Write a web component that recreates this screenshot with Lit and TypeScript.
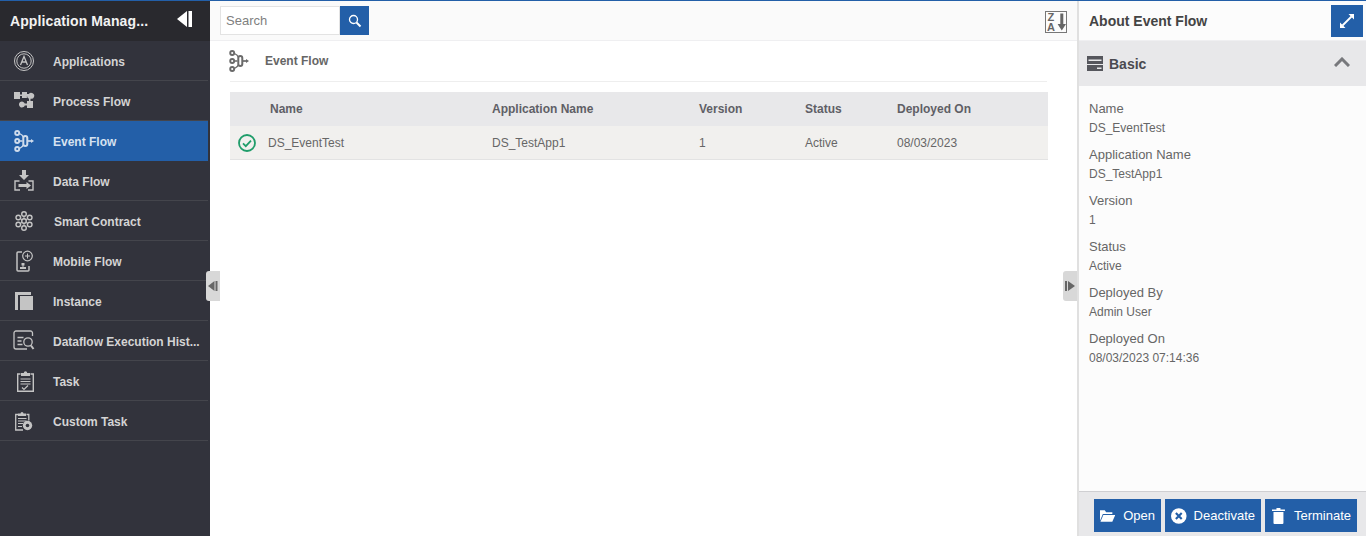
import { LitElement, html, css, svg } from "lit";
import { customElement } from "lit/decorators.js";

const navIcons: Record<string, unknown> = {
  app: svg`<circle cx="12" cy="12" r="9.500" fill="none" stroke="currentColor" stroke-width="1"/><circle cx="12" cy="12" r="7.200" fill="none" stroke="currentColor" stroke-width="1"/><path d="M8.500 16 12 7.500 15.500 16M9.800 13h4.400" fill="none" stroke="currentColor" stroke-width="1.300"/>`,
  process: svg`<path d="M2 3h6v2.500h2V3h5v2h1.800a3 3 0 1 1 1.700 4.700V12H21v7h-6v-2.500h-2.200a3 3 0 1 1 0-2H15V12h2v-2.300A3 3 0 0 1 15 7h-0.100v2H10V7H8v3H2z" fill="currentColor"/>`,
  event: svg`<g fill="none" stroke="currentColor"><circle cx="5.200" cy="4" r="2" stroke-width="1.900"/><circle cx="5.200" cy="12" r="2" stroke-width="1.900"/><circle cx="5.200" cy="20" r="2" stroke-width="1.900"/><path d="M7.500 4.500c2.500 1 3.500 2.500 4 4M7.500 12h3M7.500 19.500c2.500-1 3.500-2.500 4-4" stroke-width="1.300"/><rect x="11.300" y="7" width="4" height="10" rx="2" stroke-width="2"/><path d="M15.500 12h4" stroke-width="1.700"/></g><path d="M19 10l3 2-3 2z" fill="currentColor"/>`,
  data: svg`<path d="M10 1h4v5h3l-5 5-5-5h3z" fill="currentColor"/><path d="M7.500 12H3v9h5M16.500 12H21v9h-5" fill="none" stroke="currentColor" stroke-width="1.400"/><path d="M6.500 15h8v-2l4.500 3.500-4.500 3.500v-2h-8z" fill="currentColor"/>`,
  smart: svg`<g fill="none" stroke="currentColor" stroke-width="1.400"><circle cx="12" cy="5" r="2.300"/><circle cx="12" cy="19" r="2.300"/><circle cx="6.300" cy="8.500" r="2.300"/><circle cx="17.700" cy="8.500" r="2.300"/><circle cx="6.300" cy="15.500" r="2.300"/><circle cx="17.700" cy="15.500" r="2.300"/><circle cx="12" cy="12" r="2.300"/><path d="M12 7v3M12 14v3M8.200 9.500l2 1.200M15.800 9.500l-2 1.200M8.200 14.500l2-1.200M15.800 14.500l-2-1.200" stroke-width="1"/></g>`,
  mobile: svg`<path d="M10 3H6a1 1 0 0 0-1 1v17a1 1 0 0 0 1 1h10a1 1 0 0 0 1-1v-4" fill="none" stroke="currentColor" stroke-width="1.500"/><circle cx="15.500" cy="7" r="4.800" fill="none" stroke="currentColor" stroke-width="1.200"/><path d="M13 7h5M15.500 4.500v5" stroke="currentColor" stroke-width="1"/><path d="M8 20v-2h2.500v-1.500h-1V14h3v2.500h-1V18H14v2z" fill="currentColor"/>`,
  instance: svg`<path d="M3 3h16v3H6v15H3z" fill="currentColor"/><rect x="8" y="7" width="13" height="14" fill="currentColor"/>`,
  history: svg`<path d="M20.500 7V4a2 2 0 0 0-2-2H4a2 2 0 0 0-2 2v14a2 2 0 0 0 2 2h11" fill="none" stroke="currentColor" stroke-width="1.300"/><path d="M5.500 8.500h6M5.500 12h4M5.500 15.500h5" stroke="currentColor" stroke-width="1.300"/><circle cx="16" cy="13" r="4.200" fill="none" stroke="currentColor" stroke-width="1.300"/><path d="M19 16.500l2.500 3.500" stroke="currentColor" stroke-width="2"/>`,
  task: svg`<path d="M8.500 5H5.700v17.300h15.600V5h-2.800" fill="none" stroke="currentColor" stroke-width="1.400"/><path d="M9 7V4h2.800a1.700 1.700 0 0 1 3.400 0H18v3z" fill="currentColor"/><path d="M8.500 10h10M8.500 12.500h10M8.500 15h10" stroke="currentColor" stroke-width="1.100"/><path d="M10 18.500l2 2 4-4" fill="none" stroke="currentColor" stroke-width="1.200"/>`,
  custom: svg`<path d="M6 5.500H3.700V21H11M14.500 5.500h2.300v6" fill="none" stroke="currentColor" stroke-width="1.300"/><path d="M6 7V4.500h2.500a1.500 1.500 0 0 1 3 0H14V7z" fill="currentColor"/><path d="M6 9.500h8.500M6 12h8.500M6 14.500h5M6 17.500h4" stroke="currentColor" stroke-width="1.100"/><circle cx="15.500" cy="16.500" r="4.700" fill="currentColor"/><circle cx="15.500" cy="16.500" r="1.800" fill="#32333c"/>`,
};

const navItems = [
  { label: "Applications", icon: "app" },
  { label: "Process Flow", icon: "process" },
  { label: "Event Flow", icon: "event", active: true },
  { label: "Data Flow", icon: "data" },
  { label: "Smart Contract", icon: "smart", nudge: true },
  { label: "Mobile Flow", icon: "mobile" },
  { label: "Instance", icon: "instance" },
  { label: "Dataflow Execution Hist...", icon: "history" },
  { label: "Task", icon: "task" },
  { label: "Custom Task", icon: "custom" },
];

const details = [
  ["Name", "DS_EventTest"],
  ["Application Name", "DS_TestApp1"],
  ["Version", "1"],
  ["Status", "Active"],
  ["Deployed By", "Admin User"],
  ["Deployed On", "08/03/2023 07:14:36"],
];

@customElement("app-root")
export class AppRoot extends LitElement {
  static styles = css`
    :host {
      display: block;
      height: 536px;
      overflow: hidden;
      position: relative;
      font-family: "Liberation Sans", Arial, sans-serif;
      font-size: 12px;
      color: #666;
      background: #fff;
      border-top: 1px solid #235fa8;
      box-sizing: border-box;
    }
    .layout {
      display: flex;
      height: 535px;
    }
    .sidebar {
      width: 210px;
      flex: none;
      background: #32333c;
    }
    .side-head {
      height: 40px;
      background: #29292e;
      display: flex;
      align-items: center;
      justify-content: space-between;
      padding: 0 18px 0 10px;
      color: #f2f2f2;
      font-size: 14px;
      font-weight: bold;
      letter-spacing: 0.1px;
    }
    .side-head svg {
      margin-top: -5px;
    }
    .nav-item {
      width: 208px;
      height: 40px;
      box-sizing: border-box;
      border-bottom: 1px solid #44454c;
      display: flex;
      align-items: center;
      padding-left: 12px;
      gap: 17px;
      color: #d4d4d4;
      font-weight: bold;
      font-size: 12px;
    }
    .nav-item span {
      padding-top: 2px;
    }
    .nav-item.nudge span {
      margin-left: 1px;
    }
    .nav-item.active {
      background: #235fa8;
      color: #d6e2f0;
      border-bottom-color: #235fa8;
    }
    .nav-item svg {
      width: 24px;
      height: 24px;
      flex: none;
      color: #c4c4c4;
      margin-top: 1px;
    }
    .nav-item.active svg {
      color: #cfdcec;
    }
    .main {
      flex: 1;
      min-width: 0;
      display: flex;
      flex-direction: column;
    }
    .toolbar {
      height: 40px;
      box-sizing: border-box;
      background: #fafafa;
      border-bottom: 1px solid #efeff1;
      display: flex;
      align-items: center;
      justify-content: space-between;
      padding: 0 10px 0 10px;
    }
    .toolbar > svg {
      margin-top: 3px;
    }
    .search {
      display: flex;
      height: 29px;
    }
    .search-box {
      width: 120px;
      box-sizing: border-box;
      background: #fff;
      border: 1px solid #e3e3e3;
      color: #808080;
      font-size: 13px;
      display: flex;
      align-items: center;
      padding: 0 0 1px 5px;
    }
    .search-btn {
      width: 29px;
      background: #235fa8;
      display: flex;
      align-items: center;
      justify-content: center;
    }
    .content {
      padding: 0 0 0 20px;
    }
    .title {
      height: 41px;
      box-sizing: border-box;
      border-bottom: 1px solid #eeeeee;
      display: flex;
      align-items: center;
      gap: 14px;
      color: #666;
      font-weight: bold;
      width: 817px;
      margin-bottom: 10px;
    }
    .title svg {
      width: 24px;
      height: 24px;
      color: #6a6a6a;
      margin-left: -3px;
    }
    .row {
      display: grid;
      grid-template-columns: 262px 207px 106px 92px 1fr;
      width: 818px;
      align-items: center;
    }
    .row.header {
      height: 34px;
      background: #e8e8ea;
      font-weight: bold;
      color: #5f5f66;
    }
    .row.body {
      height: 34px;
      box-sizing: border-box;
      background: #f1f0ee;
      border-bottom: 1px solid #e3e3e3;
      color: #666;
    }
    .row.header .first {
      padding-left: 40px;
    }
    .row.body .first {
      display: flex;
      align-items: center;
      gap: 12px;
      padding-left: 8px;
    }
    .panel {
      width: 289px;
      flex: none;
      box-sizing: border-box;
      border-left: 2px solid #e0e0e0;
      background: #fcfcfc;
      display: flex;
      flex-direction: column;
    }
    .panel-head {
      height: 40px;
      box-sizing: border-box;
      display: flex;
      align-items: center;
      justify-content: space-between;
      padding: 0 3px 0 10px;
      color: #444;
      font-size: 14px;
      font-weight: bold;
      border-bottom: 1px solid #efeff1;
    }
    .expand {
      width: 32px;
      height: 32px;
      background: #235fa8;
      display: flex;
      align-items: center;
      justify-content: center;
    }
    .section {
      height: 45px;
      background: #e8e8ea;
      display: flex;
      align-items: center;
      padding: 0 16px 0 8px;
      color: #4a4a50;
      font-size: 14px;
      font-weight: bold;
      gap: 6px;
    }
    .section .chev {
      margin-left: auto;
      margin-top: -3px;
    }
    .fields {
      flex: 1;
      padding: 15px 10px 0;
    }
    .field {
      height: 46px;
    }
    .field .k {
      font-size: 13px;
      line-height: 16px;
      color: #666;
    }
    .field .v {
      font-size: 12px;
      line-height: 18px;
      color: #666;
      margin-top: 2px;
    }
    .footer {
      height: 45px;
      box-sizing: border-box;
      background: #e8e8ea;
      border-top: 1px solid #cfcfd2;
      display: flex;
      gap: 4px;
      padding: 7px 0 0 15px;
    }
    .btn {
      height: 33px;
      background: #235fa8;
      color: #fff;
      font-size: 13px;
      display: flex;
      align-items: center;
      box-sizing: border-box;
      padding: 0 6px;
    }
    .btn.open {
      width: 67px;
      gap: 8px;
    }
    .btn.deactivate {
      width: 96px;
      gap: 7px;
    }
    .btn.terminate {
      width: 92px;
      gap: 9px;
      padding-left: 7px;
    }
    .handle {
      position: absolute;
      top: 270px;
      width: 14px;
      height: 30px;
      background: #d8d8d8;
      display: flex;
      align-items: center;
      justify-content: center;
    }
    .handle.left {
      left: 206px;
      border-radius: 3px 0 0 3px;
    }
    .handle.right {
      left: 1063px;
      border-radius: 3px 0 0 3px;
    }
  `;

  render() {
    return html`
      <div class="layout">
        <aside class="sidebar">
          <div class="side-head">
            <span>Application Manag...</span>
            <svg width="15" height="16" viewBox="0 0 15 16"><path d="M10 0v16L0 8z" fill="#fff"/><rect x="11.500" width="3.500" height="16" fill="#fff"/></svg>
          </div>
          ${navItems.map(
            (n) => html`
              <div class="nav-item ${n.active ? "active" : ""} ${n.nudge ? "nudge" : ""}">
                <svg viewBox="0 0 24 24">${navIcons[n.icon]}</svg>
                <span>${n.label}</span>
              </div>
            `
          )}
        </aside>
        <main class="main">
          <div class="toolbar">
            <div class="search">
              <div class="search-box">Search</div>
              <div class="search-btn">
                <svg width="14" height="14" viewBox="0 0 14 14"><circle cx="5.500" cy="5.500" r="4" fill="none" stroke="#fff" stroke-width="1.300"/><path d="M8.500 8.500l4 4" stroke="#fff" stroke-width="2"/></svg>
              </div>
            </div>
            <svg width="22" height="22" viewBox="0 0 22 22">
              <rect x=".5" y=".5" width="21" height="21" fill="#fcfcfc" stroke="#777"/>
              <text x="2.500" y="10" font-family="Liberation Sans" font-weight="bold" font-size="11" fill="#666">Z</text>
              <text x="2" y="19.500" font-family="Liberation Sans" font-weight="bold" font-size="11" fill="#666">A</text>
              <path d="M15.300 2.500h3v10.500H21l-4.200 6.500-4.200-6.500h2.700z" fill="#666"/>
            </svg>
          </div>
          <div class="content">
            <div class="title">
              <svg viewBox="0 0 24 24">${navIcons.event}</svg>
              <span>Event Flow</span>
            </div>
            <div class="row header">
              <div class="first">Name</div>
              <div>Application Name</div>
              <div>Version</div>
              <div>Status</div>
              <div>Deployed On</div>
            </div>
            <div class="row body">
              <div class="first">
                <svg width="18" height="18" viewBox="0 0 18 18"><circle cx="9" cy="9" r="8" fill="none" stroke="#1f9d6a" stroke-width="1.800"/><path d="M5 9.300l2.800 2.800 5.200-5.400" fill="none" stroke="#1f9d6a" stroke-width="1.800"/></svg>
                <span>DS_EventTest</span>
              </div>
              <div>DS_TestApp1</div>
              <div>1</div>
              <div>Active</div>
              <div>08/03/2023</div>
            </div>
          </div>
        </main>
        <aside class="panel">
          <div class="panel-head">
            <span>About Event Flow</span>
            <div class="expand">
              <svg width="16" height="16" viewBox="0 0 16 16"><path d="M3.500 12.500l9-9" stroke="#fff" stroke-width="1.800"/><path d="M9.500 1H15v5.500zM6.500 15H1V9.500z" fill="#fff"/></svg>
            </div>
          </div>
          <div class="section">
            <svg width="16" height="15" viewBox="0 0 16 15"><path d="M0 0h16v15H0z" fill="#55565c"/><path d="M1.500 3.500h13v1.500h-13zM0 8h16v1H0zM10 11.500h4.500V13H10z" fill="#e8e8ea"/></svg>
            <span>Basic</span>
            <svg class="chev" width="16" height="10" viewBox="0 0 16 10"><path d="M1 9l7-7 7 7" fill="none" stroke="#77787c" stroke-width="3"/></svg>
          </div>
          <div class="fields">
            ${details.map(
              ([k, v]) => html`
                <div class="field">
                  <div class="k">${k}</div>
                  <div class="v">${v}</div>
                </div>
              `
            )}
          </div>
          <div class="footer">
            <div class="btn open">
              <svg width="16" height="14" viewBox="0 0 16 14"><path d="M0 1h5l1.500 2H13v2H3L0 12z" fill="#fff"/><path d="M3.500 6H16l-3 7H.5z" fill="#fff"/></svg>
              Open
            </div>
            <div class="btn deactivate">
              <svg width="16" height="16" viewBox="0 0 16 16"><circle cx="8" cy="8" r="8" fill="#fff"/><path d="M5 5l6 6M11 5l-6 6" stroke="#235fa8" stroke-width="2.200"/></svg>
              Deactivate
            </div>
            <div class="btn terminate">
              <svg width="13" height="16" viewBox="0 0 13 16"><path d="M4.500 0h4v1.500H13V3H0V1.500h4.500zM1.500 4h10v11a1 1 0 0 1-1 1h-8a1 1 0 0 1-1-1z" fill="#fff"/></svg>
              Terminate
            </div>
          </div>
        </aside>
      </div>
      <div class="handle left">
        <svg width="10" height="10" viewBox="0 0 10 10"><path d="M6.500 0v10L0 5z" fill="#666"/><rect x="7.500" width="2" height="10" fill="#666"/></svg>
      </div>
      <div class="handle right">
        <svg width="10" height="10" viewBox="0 0 10 10"><rect width="2" height="10" fill="#666"/><path d="M3 0v10l7-5z" fill="#666"/></svg>
      </div>
    `;
  }
}
